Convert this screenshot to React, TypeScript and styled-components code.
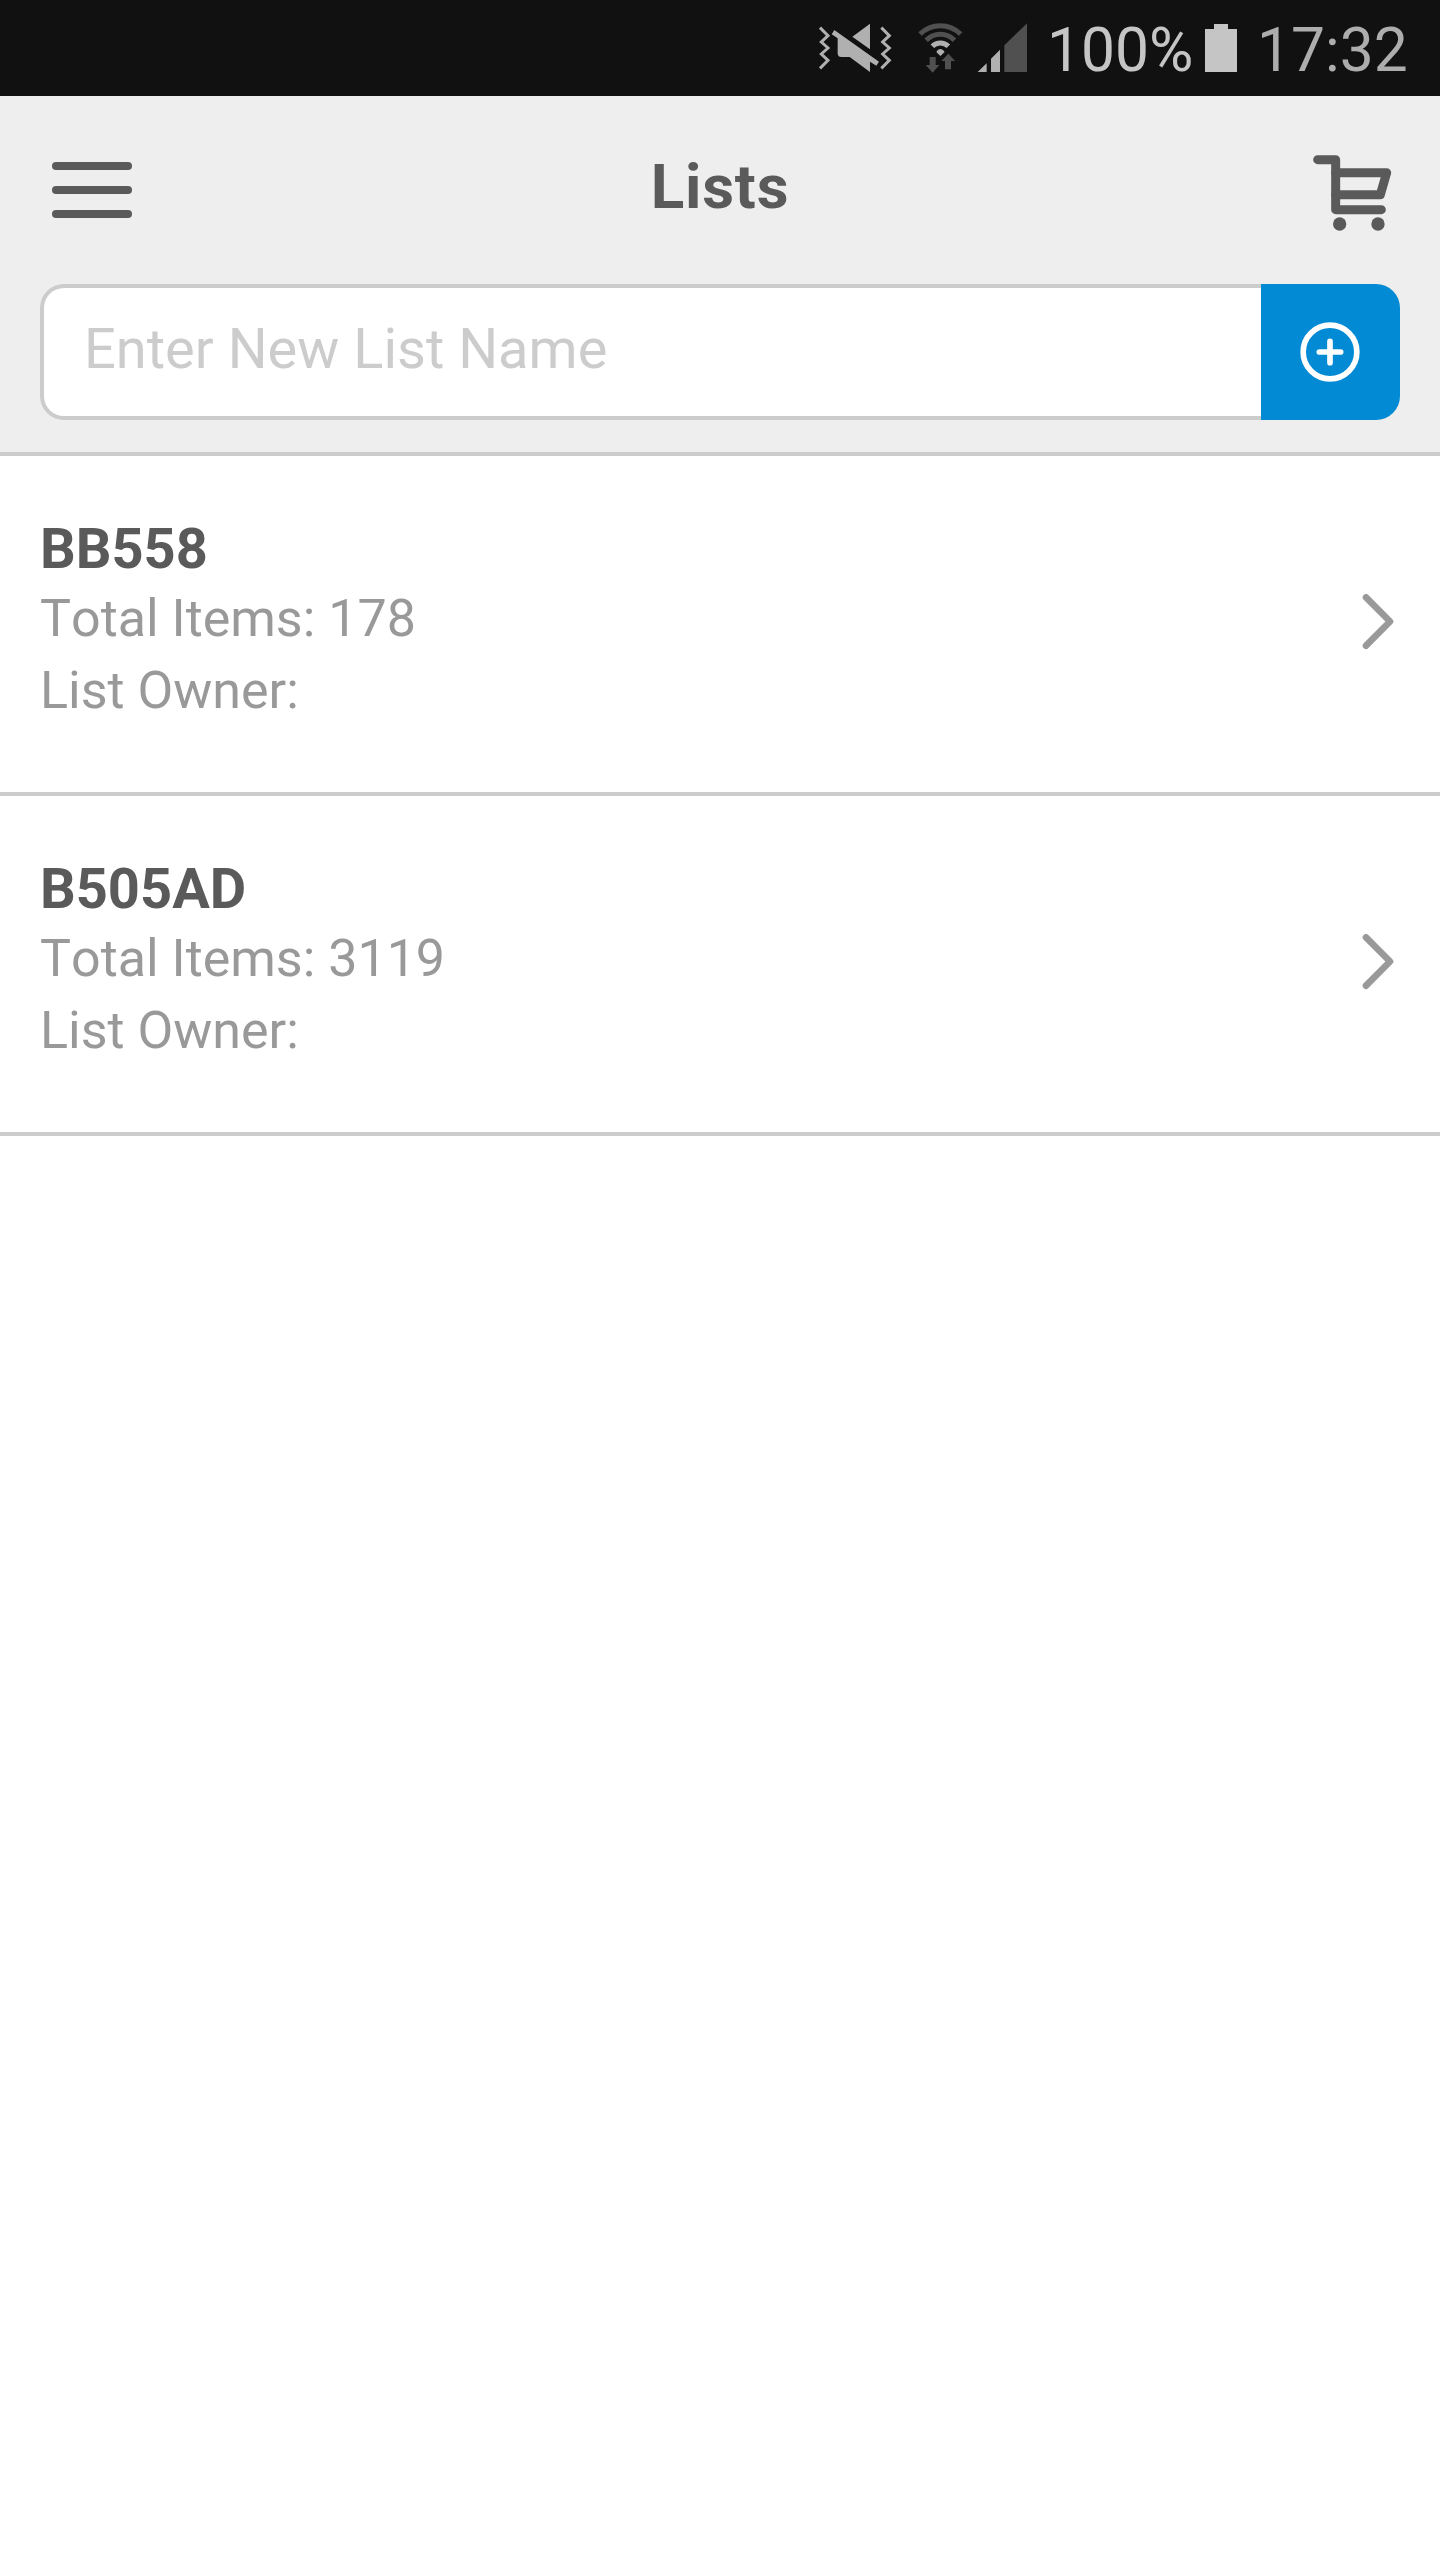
import React from "react";
import styled, { createGlobalStyle } from "styled-components";

const GlobalStyle = createGlobalStyle`
  *, *::before, *::after { box-sizing: border-box; }
  body {
    margin: 0;
    background: #ffffff;
    font-family: Roboto, "Liberation Sans", sans-serif;
    font-kerning: none;
  }
  svg { display: block; flex: none; }
`;

const Screen = styled.div`
  display: flex;
  flex-direction: column;
  width: 1440px;
  min-height: 2560px;
  background: #ffffff;
`;

const StatusBar = styled.div`
  display: flex;
  justify-content: flex-end;
  align-items: flex-start;
  height: 96px;
  padding: 22px 31px 0 0;
  background: #111111;
`;

const StatusIcon = styled.svg<{ $gap: number }>`
  margin-right: ${(p) => p.$gap}px;
`;

const StatusText = styled.span<{ $color: string; $width: number }>`
  width: ${(p) => p.$width}px;
  color: ${(p) => p.$color};
  font-size: 60.5px;
  line-height: 58px;
  white-space: nowrap;
`;

const Header = styled.header`
  height: 360px;
  background: #eeeeee;
  border-bottom: 4px solid #cccccc;
`;

const TitleBar = styled.div`
  display: grid;
  grid-template-columns: 84px 1fr 84px;
  align-items: start;
  height: 188px;
  padding: 58px 48px 0;
`;

const MenuButton = styled.button`
  display: flex;
  flex-direction: column;
  gap: 16px;
  margin: 8px 0 0 4px;
  padding: 0;
  border: 0;
  background: none;
`;

const MenuBar = styled.span`
  width: 80px;
  height: 8px;
  border-radius: 4px;
  background: #5a5a5a;
`;

const Title = styled.h1`
  margin: 0;
  color: #5a5a5a;
  font-size: 62px;
  font-weight: 700;
  line-height: 66px;
  letter-spacing: 0.8px;
  text-align: center;
`;

const CartIcon = styled.svg`
  justify-self: end;
`;

const NewListForm = styled.div`
  display: flex;
  height: 136px;
  margin: 0 40px;
`;

const NameInput = styled.input`
  flex: 1;
  min-width: 0;
  padding: 0 0 7px 40px;
  border: 4px solid #cccccc;
  border-right: 0;
  border-radius: 24px 0 0 24px;
  background: #ffffff;
  color: #5a5a5a;
  font-family: inherit;
  font-size: 56px;
  outline: none;
  &::placeholder { color: #cccccc; opacity: 1; }
`;

const AddButton = styled.button`
  display: flex;
  align-items: center;
  justify-content: center;
  width: 139px;
  padding: 0 1px 0 0;
  border: 0;
  border-radius: 0 24px 24px 0;
  background: #028ad4;
`;

const Row = styled.div`
  display: flex;
  justify-content: space-between;
  height: 340px;
  padding: 59px 46px 0 40px;
  border-bottom: 4px solid #cccccc;
`;

const ListName = styled.div`
  color: #5a5a5a;
  font-size: 56px;
  font-weight: 700;
  line-height: 68px;
`;

const Detail = styled.div`
  color: #999999;
  font-size: 52px;
  line-height: 72px;
`;

const Chevron = styled.svg`
  margin-top: 79px;
`;

const lists = [
  { name: "BB558", total: 178, owner: "" },
  { name: "B505AD", total: 3119, owner: "" },
];

const wifiArc = (r: number) => {
  const d = r * 0.707;
  return `M${421 - d} ${163 - d}A${r} ${r} 0 0 1 ${421 + d} ${163 - d}`;
};

export default function App() {
  return (
    <Screen>
      <GlobalStyle />
      <StatusBar>
        <StatusIcon $gap={26} width="74" height="51" viewBox="54 66 222 153">
          <g fill="none" stroke="#b0b0b0" strokeWidth="9">
            <path d="M60 83L84 107L64 126L84 144L64 162L84 181L60 205" />
            <path d="M244 83L268 107L248 126L268 144L248 162L268 181L244 205" />
          </g>
          <path
            fill="#b0b0b0"
            d="M157 110L210 71V148ZM103 90L237 185L229 197L210 185V216L149 171H124Q113 171 113 160V115L95 103Z"
          />
        </StatusIcon>
        <StatusIcon $gap={14} width="45" height="51" viewBox="354 66 135 153">
          <g fill="none" strokeWidth="15">
            <path stroke="#505050" d={wifiArc(86)} />
            <path stroke="#505050" d={wifiArc(60)} />
            <path stroke="#b0b0b0" d={wifiArc(34)} />
          </g>
          <path fill="#b0b0b0" d="M421 168L409 156Q413 147 421 147Q429 147 434 156Z" />
          <path
            fill="#505050"
            d="M389 171H407V195H418L398 218L377 195H389ZM435 208V183H424L445 161L465 183H453V208Z"
          />
        </StatusIcon>
        <StatusIcon $gap={19} width="51" height="51" viewBox="531 66 153 153">
          <path fill="#b0b0b0" d="M533 216L560 190V216ZM573 216V176L600 149V216Z" />
          <path fill="#505050" d="M613 216V136L681 70V216Z" />
        </StatusIcon>
        <StatusText $color="#c5c5c5" $width={158}>100%</StatusText>
        <StatusIcon $gap={20} width="32" height="50" viewBox="0 0 32 50">
          <path fill="#c5c5c5" d="M0 7H9V2H23V7H32V50H0Z" />
        </StatusIcon>
        <StatusText $color="#adadad" $width={152}>17:32</StatusText>
      </StatusBar>

      <Header>
        <TitleBar>
          <MenuButton aria-label="Menu">
            <MenuBar />
            <MenuBar />
            <MenuBar />
          </MenuButton>
          <Title>Lists</Title>
          <CartIcon width="80" height="77" viewBox="216 72 240 231">
            <g
              fill="none"
              stroke="#5a5a5a"
              strokeWidth="27"
              strokeLinecap="round"
              strokeLinejoin="round"
            >
              <path d="M233 89H287V239H424" />
              <path d="M287 128H440L421 194H287" />
            </g>
            <circle cx="299" cy="282" r="20" fill="#5a5a5a" />
            <circle cx="414" cy="282" r="20" fill="#5a5a5a" />
          </CartIcon>
        </TitleBar>
        <NewListForm>
          <NameInput placeholder="Enter New List Name" />
          <AddButton aria-label="Add list">
            <svg width="60" height="60" viewBox="0 0 180 180">
              <g fill="none" stroke="#ffffff" strokeWidth="17" strokeLinecap="round">
                <circle cx="90" cy="90" r="80.5" />
                <path d="M58 90H122M90 58V122" />
              </g>
            </svg>
          </AddButton>
        </NewListForm>
      </Header>

      {lists.map((list) => (
        <Row key={list.name}>
          <div>
            <ListName>{list.name}</ListName>
            <Detail>Total Items: {list.total}</Detail>
            <Detail>List Owner: {list.owner}</Detail>
          </div>
          <Chevron width="32" height="56" viewBox="126 102 96 168">
            <path
              fill="none"
              stroke="#999999"
              strokeWidth="20"
              strokeLinecap="round"
              strokeLinejoin="round"
              d="M138 112L210 184.500L138 257"
            />
          </Chevron>
        </Row>
      ))}
    </Screen>
  );
}
